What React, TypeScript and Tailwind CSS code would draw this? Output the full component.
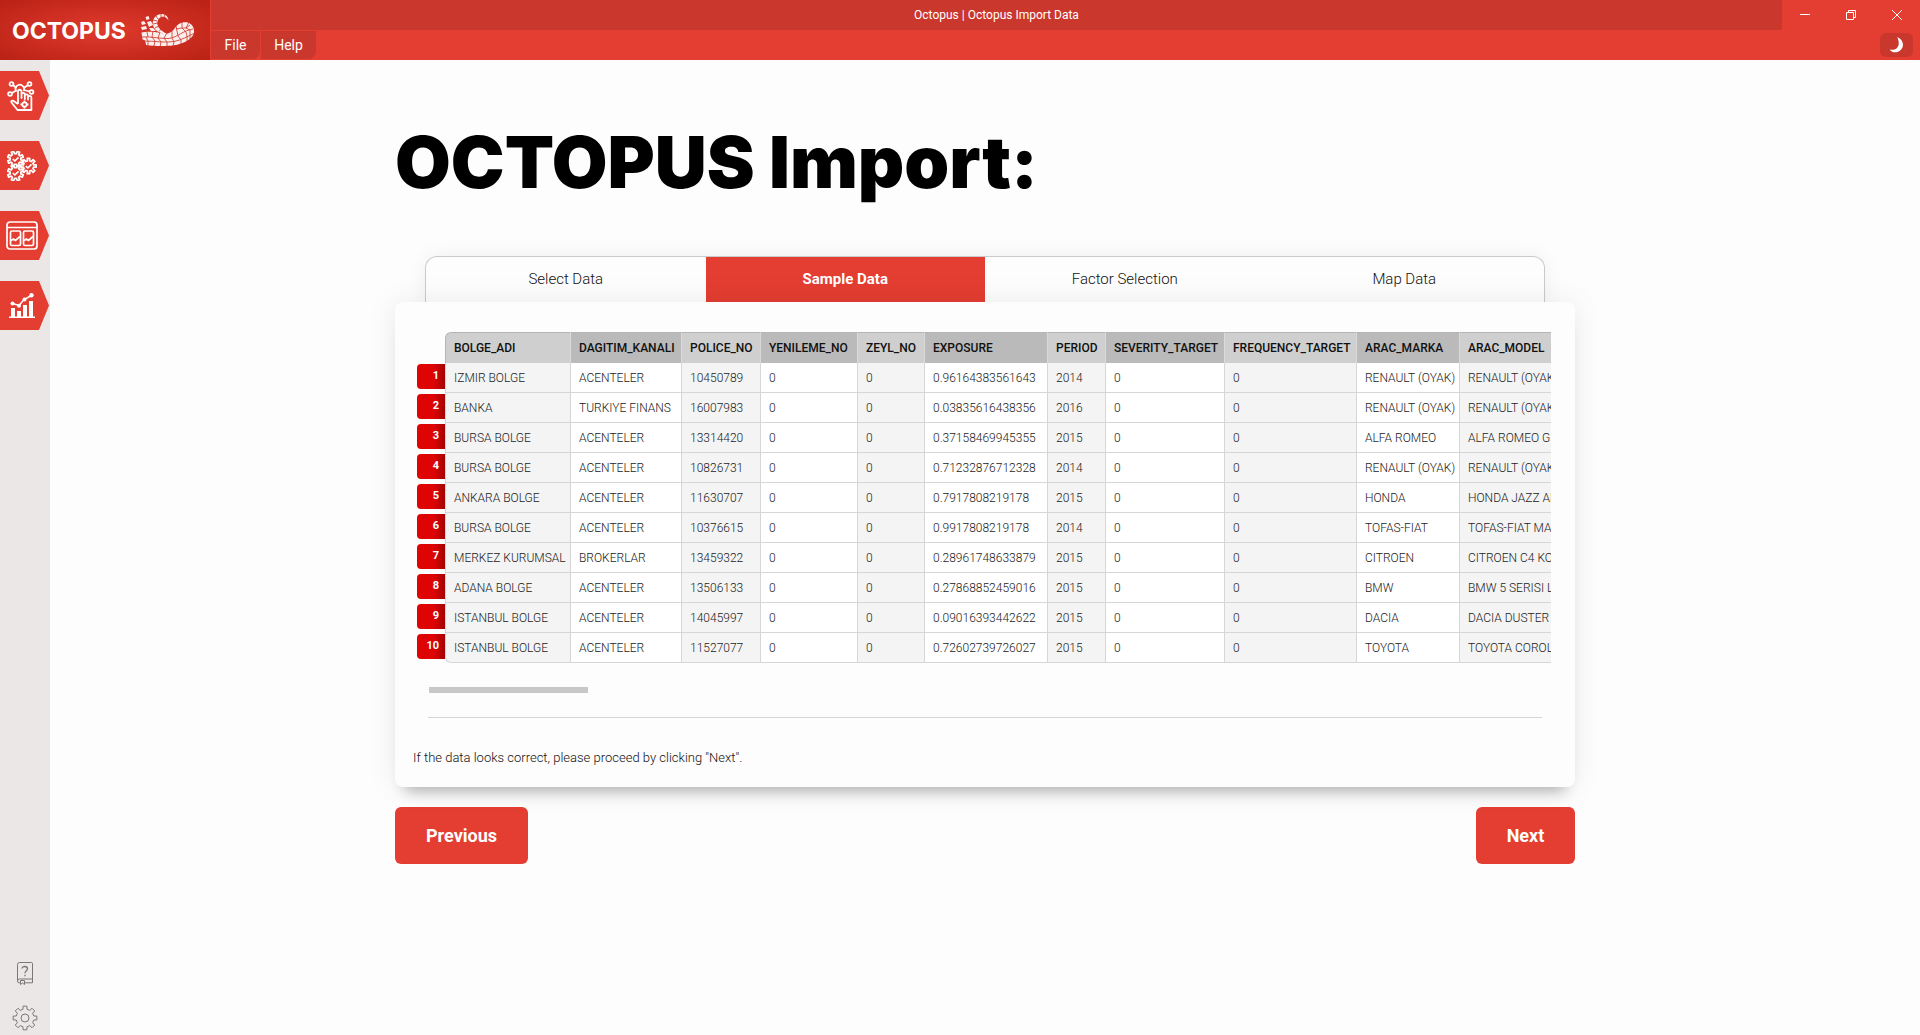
import React from "react";

const COLUMNS = [
  { name: "BOLGE_ADI", width: "w-[126px]" },
  { name: "DAGITIM_KANALI", width: "w-[111px]" },
  { name: "POLICE_NO", width: "w-[79px]" },
  { name: "YENILEME_NO", width: "w-[97px]" },
  { name: "ZEYL_NO", width: "w-[67px]" },
  { name: "EXPOSURE", width: "w-[123px]" },
  { name: "PERIOD", width: "w-[58px]" },
  { name: "SEVERITY_TARGET", width: "w-[119px]" },
  { name: "FREQUENCY_TARGET", width: "w-[132px]" },
  { name: "ARAC_MARKA", width: "w-[103px]" },
  { name: "ARAC_MODEL", width: "w-[210px]" },
];

const ROWS = [
  ["IZMIR BOLGE", "ACENTELER", "10450789", "0", "0", "0.96164383561643", "2014", "0", "0", "RENAULT (OYAK)", "RENAULT (OYAK)"],
  ["BANKA", "TURKIYE FINANS", "16007983", "0", "0", "0.03835616438356", "2016", "0", "0", "RENAULT (OYAK)", "RENAULT (OYAK)"],
  ["BURSA BOLGE", "ACENTELER", "13314420", "0", "0", "0.37158469945355", "2015", "0", "0", "ALFA ROMEO", "ALFA ROMEO GIULIETTA"],
  ["BURSA BOLGE", "ACENTELER", "10826731", "0", "0", "0.71232876712328", "2014", "0", "0", "RENAULT (OYAK)", "RENAULT (OYAK)"],
  ["ANKARA BOLGE", "ACENTELER", "11630707", "0", "0", "0.7917808219178", "2015", "0", "0", "HONDA", "HONDA JAZZ ALTERNATIF"],
  ["BURSA BOLGE", "ACENTELER", "10376615", "0", "0", "0.9917808219178", "2014", "0", "0", "TOFAS-FIAT", "TOFAS-FIAT MAREA"],
  ["MERKEZ KURUMSAL", "BROKERLAR", "13459322", "0", "0", "0.28961748633879", "2015", "0", "0", "CITROEN", "CITROEN C4 KOMBI"],
  ["ADANA BOLGE", "ACENTELER", "13506133", "0", "0", "0.27868852459016", "2015", "0", "0", "BMW", "BMW 5 SERISI LIMUZIN"],
  ["ISTANBUL BOLGE", "ACENTELER", "14045997", "0", "0", "0.09016393442622", "2015", "0", "0", "DACIA", "DACIA DUSTER 4X4"],
  ["ISTANBUL BOLGE", "ACENTELER", "11527077", "0", "0", "0.72602739726027", "2015", "0", "0", "TOYOTA", "TOYOTA COROLLA"],
];

const TABS = ["Select Data", "Sample Data", "Factor Selection", "Map Data"];
const ACTIVE_TAB = "Sample Data";

/** Outline of a gear with flat-topped teeth around (cx, cy). */
function gearPath(cx: number, cy: number, outer: number, inner: number, teeth: number, turn = 0) {
  const step = (Math.PI * 2) / teeth;
  const points: string[] = [];
  for (let i = 0; i < teeth; i++) {
    const a = i * step + turn;
    const corners: [number, number][] = [
      [-0.29, inner],
      [-0.2, outer],
      [0.2, outer],
      [0.29, inner],
    ];
    for (const [offset, radius] of corners) {
      const t = a + offset * step;
      points.push(`${(cx + radius * Math.cos(t)).toFixed(2)} ${(cy + radius * Math.sin(t)).toFixed(2)}`);
    }
  }
  return `M${points.join("L")}Z`;
}

function OctopusLogo() {
  return (
    <svg width="56" height="34" viewBox="139 13 56 34" fill="none" aria-hidden="true">
      <path
        d="M168.500 20.500C168 15.500 164 13.500 160 14.200C155 15 152 20 153 25C153.800 29 157 32 163 34L167 34C161 30.500 157.500 27.500 157.300 23.500C157.200 19.500 160 16.800 163 16.800C165.500 16.800 167 18.500 168.500 20.500Z"
        fill="#fbeeed"
      />
      <path
        d="M141.500 32.500C146 31.500 155 31 162 33.500C168 34.500 172 32.500 175 28C178 23 183 21.500 188 22.500C192.500 24 194.500 28.500 194 32.500C193 38 187 41.500 181 43.500C174 46.500 158 46.500 146 45C145.800 43 145.500 41.500 144.500 40L142.500 39.500Z"
        fill="#fbeeed"
      />
      <path
        d="M145.500 17l3-1 1 3-3 1zM141 22l3-1 2 3-4 1zM147 22l4-1 2 4-4 2zM141 27l5-1 1 3-5 1zM149 28l4 0 3 3-5 0z"
        fill="#fbeeed"
      />
      <g stroke="#cb3023" strokeWidth="0.8">
        <path d="M141 37C150 36 160 39 169 38.500C178 37 182 31 193 29" />
        <path d="M143 41C155 41 165 43 174 41.500C182 40 188 36 194 33.500" />
        <path d="M147 32l1 5M146 37l2 4 0 5M153 31l-1 6 3 4-1 5M160 32l-2 6 3 4-1 5M167 33l-3 5 3 4 0 5M172 31l0 7 2 4-1 4M176 26l2 10 3 4 0 5M182 22l0 6 4 4 1 4 0 6M189 22l-3 6 4 2 0 9M176 29l6-1 4 0 4-3" />
        <path d="M153 20l4 1M153 24l5-1M155 28l4-2M156 16l2 3M161 13.500l0 4M165 14.500l-1 3M159 31.500l2-2.500" />
      </g>
    </svg>
  );
}

function TouchIcon() {
  return (
    <svg width="28" height="30" viewBox="0 0 28 30" fill="none" stroke="white" strokeWidth="1.800" strokeLinejoin="round" aria-hidden="true">
      <circle cx="4.500" cy="3" r="1.900" />
      <circle cx="22.500" cy="3" r="1.900" />
      <circle cx="3" cy="13" r="1.900" />
      <circle cx="24.500" cy="11" r="1.900" />
      <path d="M6.500 4.500L9.500 7M20.500 4.500L16.500 7M5 12L9 9.500M22.500 10.500L17 9" />
      <path d="M9.500 10.500a4.200 4.200 0 1 1 7 -.5" />
      <path d="M11 23V10.500a1.700 1.700 0 0 1 3.500 0V17v-3.500a1.500 1.500 0 0 1 3.300 0V18v-3a1.500 1.500 0 0 1 3.200 0V18.500v-2a1.600 1.600 0 0 1 3.400 0V29H10.500L4.500 21.500C3.500 20 5.500 19 7 20.200L11 23" />
      <circle cx="17.500" cy="23.500" r="2.200" />
      <path d="M17.500 19.500v2M17.500 25.500v2M13.500 23.500h2M19.500 23.500h2" />
    </svg>
  );
}

function GearsIcon() {
  return (
    <svg width="30" height="30" viewBox="0 0 30 30" fill="none" stroke="white" strokeWidth="1.700" strokeLinejoin="round" aria-hidden="true">
      <path d={gearPath(8.5, 8, 8, 5.4, 8, 0.39)} />
      <path d={gearPath(21.5, 15, 7.8, 5.2, 8)} />
      <path d={gearPath(8.5, 22, 8, 5.4, 8, 0.39)} />
      <path d="M5.800 8l2 2 3.700-3.700M18.800 15l2 2 3.700-3.700M5.800 22l2 2 3.700-3.700" />
    </svg>
  );
}

function PanelsIcon() {
  return (
    <svg width="32" height="29" viewBox="0 0 32 29" fill="none" stroke="white" strokeWidth="1.700" aria-hidden="true">
      <rect x="1" y="1" width="30" height="27" rx="3" />
      <path d="M1 6.500h30" />
      <rect x="4.500" y="10" width="10" height="14.500" rx="1.500" />
      <rect x="17.500" y="10" width="10" height="14.500" rx="1.500" />
      <path d="M5 19.500l2.500-1.500 2 1.500 4.500-4M18 19.500l2.500-1.500 2 1.500 4.500-4" />
    </svg>
  );
}

function ChartIcon() {
  return (
    <svg width="26" height="25" viewBox="0 0 26 25" fill="white" aria-hidden="true">
      <path d="M0 23.500h26V25H0zM2 15h4v9H2zM8 18h4v6H8zM14 12h4v12h-4zM20 8h4v16h-4z" />
      <path d="M3.500 10.500L10 12.500 15 6.500 22.500 2.500" fill="none" stroke="white" strokeWidth="1.500" />
      <circle cx="3.500" cy="10.500" r="2" />
      <circle cx="10" cy="12.700" r="2" />
      <circle cx="15.500" cy="6.500" r="2" />
      <circle cx="22.500" cy="2.300" r="2.200" />
    </svg>
  );
}

function HelpBookIcon() {
  return (
    <svg width="16" height="23" viewBox="0 0 16 23" fill="none" stroke="#7b7777" aria-hidden="true">
      <path d="M15.500 17V1.500a1 1 0 0 0-1-1h-12a2 2 0 0 0-2 2V19a1.800 1.800 0 0 0 2 1.800h1M15.500 17H2.500a1.800 1.800 0 0 0-2 2M15.500 17v3.800H7.500" />
      <path d="M3.500 18.500v4l2-1.500 2 1.500v-4z" />
      <path d="M5 6.500C5 3.800 10.500 3.800 10.500 6.700C10.500 8.700 8 8.700 8 11.200M8 12.800v1.500" strokeWidth="1.300" />
    </svg>
  );
}

function SettingsIcon() {
  return (
    <svg width="26" height="26" viewBox="0 0 26 26" fill="none" stroke="#7b7777" strokeLinejoin="round" aria-hidden="true">
      <path d={gearPath(13, 13, 12, 9, 8)} />
      <circle cx="13" cy="13" r="4" />
    </svg>
  );
}

const SIDE_ITEMS = [
  { label: "Import", icon: <TouchIcon />, pad: "pl-[7px]" },
  { label: "Processing", icon: <GearsIcon />, pad: "pl-[7px]" },
  { label: "Compare", icon: <PanelsIcon />, pad: "pl-1.5" },
  { label: "Reports", icon: <ChartIcon />, pad: "pl-[9px]" },
];

function Header() {
  return (
    <header className="flex h-[60px] bg-[#e43d31] text-white">
      <div className="flex w-[210px] shrink-0 items-center bg-[radial-gradient(ellipse_at_center,#e03a2e_0%,#b92214_100%)] pl-3">
        <span className="w-[127px] pt-0.5 font-['Inter'] text-[23px] font-bold">OCTOPUS</span>
        <OctopusLogo />
      </div>
      <div className="ml-px flex flex-1 flex-col">
        <div className="flex h-[30px]">
          <div className="flex flex-1 items-center justify-center bg-[#ca372c] text-xs">
            Octopus | Octopus Import Data
          </div>
          <button type="button" aria-label="Minimize" className="grid w-[46px] place-items-center">
            <svg width="10" height="10" stroke="white" aria-hidden="true"><path d="M0 4.500h10" /></svg>
          </button>
          <button type="button" aria-label="Restore" className="grid w-[46px] place-items-center">
            <svg width="10" height="10" fill="none" stroke="white" aria-hidden="true"><path d="M.5 2.500h7v7h-7zM2.500 2.500v-2h7v7h-2" /></svg>
          </button>
          <button type="button" aria-label="Close" className="grid w-[46px] place-items-center">
            <svg width="10" height="10" stroke="white" aria-hidden="true"><path d="M0 0l10 10M10 0L0 10" /></svg>
          </button>
        </div>
        <nav className="flex h-[30px] items-start gap-px pt-px text-sm">
          <button type="button" className="h-7 w-[49px] rounded-br-lg bg-[#ca372c]">File</button>
          <button type="button" className="h-7 w-[55px] rounded-br-lg bg-[#ca372c]">Help</button>
          <button type="button" aria-label="Dark mode" className="mt-0.5 mr-[7px] ml-auto grid h-6 w-[33px] place-items-center rounded-md bg-[#ca372c]">
            <svg width="14" height="16" viewBox="0.8 0 14 16" fill="white" aria-hidden="true"><path d="M8 0C16 3 15.500 13.500 7.500 15.200C4.500 15.800 2 14.800 .5 12.500C9 14.500 11.500 7 8 0Z" /></svg>
          </button>
        </nav>
      </div>
    </header>
  );
}

function Sidebar() {
  return (
    <aside className="flex w-[50px] shrink-0 flex-col justify-between bg-[#ece7e7] pt-[11px] pb-1">
      <nav className="flex flex-col gap-[21px]">
        {SIDE_ITEMS.map((item) => (
          <button
            key={item.label}
            type="button"
            aria-label={item.label}
            className={`flex h-[49px] w-[49px] items-center bg-[#e43d31] [clip-path:polygon(0_0,39px_0,100%_50%,39px_100%,0_100%)] ${item.pad}`}
          >
            {item.icon}
          </button>
        ))}
      </nav>
      <div className="flex flex-col items-center gap-5">
        <button type="button" aria-label="Help"><HelpBookIcon /></button>
        <button type="button" aria-label="Settings"><SettingsIcon /></button>
      </div>
    </aside>
  );
}

function SampleTable() {
  return (
    <div className="overflow-hidden">
      <table className="w-[1253px] table-fixed border-separate border-spacing-0 text-left text-xs whitespace-nowrap">
        <colgroup>
          <col className="w-7" />
          {COLUMNS.map((c) => <col key={c.name} className={c.width} />)}
        </colgroup>
        <thead>
          <tr className="h-[31px] text-[#111]">
            <td />
            {COLUMNS.map((c) => (
              <th key={c.name} scope="col" className="border-t border-r border-t-[#b5b5b5] border-r-[#dadada] px-2 py-0 font-medium odd:bg-[#bababa] even:bg-[#cfcfcf] nth-2:rounded-tl-md nth-2:border-l nth-2:border-l-[#b5b5b5]">
                {c.name}
              </th>
            ))}
          </tr>
        </thead>
        <tbody>
          {ROWS.map((row, r) => (
            <tr key={r} className="group h-[30px] font-light text-[#222]">
              <th scope="row" className="p-0 pt-px align-top font-bold text-white">
                <div className="h-[25px] rounded-l bg-[linear-gradient(90deg,#de0404_60%,#a30303_100%)] pr-1.5 text-right text-[11px] leading-6">{r + 1}</div>
              </th>
              {row.map((cell, c) => (
                <td key={c} className="overflow-hidden border-r border-b border-[#d6d6d6] px-2 py-0 odd:bg-white even:bg-[#f4f4f4] nth-2:border-l nth-2:group-last:rounded-bl-md">
                  {cell}
                </td>
              ))}
            </tr>
          ))}
        </tbody>
      </table>
    </div>
  );
}

export default function App() {
  return (
    <div className="flex min-h-screen flex-col bg-[#fdfdfd] font-['Roboto','Liberation_Sans',sans-serif] text-[#111]">
      <Header />
      <div className="flex flex-1">
        <Sidebar />
        <main className="min-w-0 flex-1">
          <div className="mx-auto max-w-[1180px] pt-[58px]">
            <h1 className="font-['Inter'] text-[72px] leading-[88px] font-black text-black">OCTOPUS Import:</h1>
            <div role="tablist" className="mx-[30px] mt-[50px] grid h-[46px] grid-cols-4 overflow-hidden rounded-t-xl border border-b-0 border-[#c9cbcb] text-[15px] font-light shadow-[0_0_20px_rgba(0,0,0,0.06)]">
              {TABS.map((tab) => (
                <button
                  key={tab}
                  type="button"
                  role="tab"
                  aria-selected={tab === ACTIVE_TAB}
                  className="aria-selected:bg-[#e43d31] aria-selected:font-bold aria-selected:text-white"
                >
                  {tab}
                </button>
              ))}
            </div>
            <section className="relative rounded-lg bg-[#fdfdfd] pt-[30px] pr-6 pb-[17px] pl-[22px] shadow-[0_0_30px_rgba(0,0,0,0.08),0_14px_14px_-10px_rgba(0,0,0,0.28)]">
              <SampleTable />
              <div className="mt-6 ml-3 h-1.5 w-[159px] bg-[#c8c8c8]" />
              <hr className="mt-6 mr-[9px] ml-[11px] border-[#d6d6d6]" />
              <p className="mt-7 -ml-1 text-[13px] leading-6 font-light">If the data looks correct, please proceed by clicking "Next".</p>
            </section>
            <div className="mt-5 flex justify-between text-lg font-bold text-white">
              <button type="button" className="h-[57px] w-[133px] rounded-md bg-[#e43d31]">Previous</button>
              <button type="button" className="h-[57px] w-[99px] rounded-md bg-[#e43d31]">Next</button>
            </div>
          </div>
        </main>
      </div>
    </div>
  );
}
